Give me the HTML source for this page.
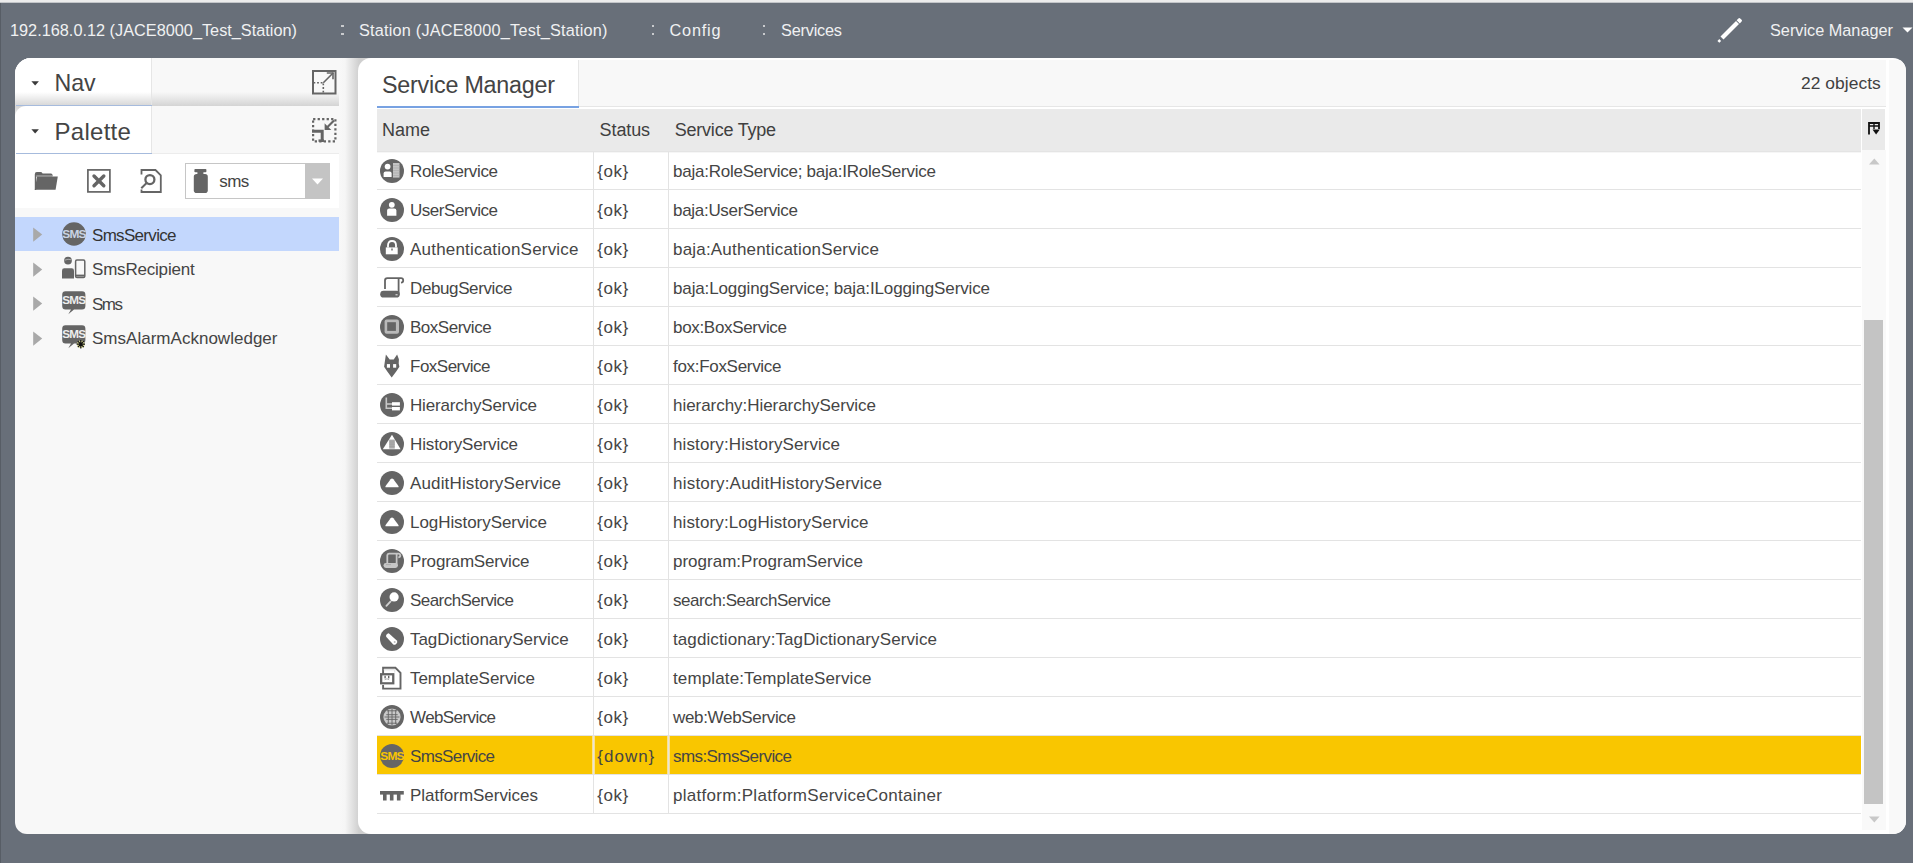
<!DOCTYPE html>
<html><head><meta charset="utf-8"><style>
*{margin:0;padding:0;box-sizing:border-box}
html,body{width:1913px;height:863px;overflow:hidden}
body{position:relative;background:#686f79;font-family:"Liberation Sans",sans-serif}
.t{position:absolute;white-space:pre;line-height:1.117em}
.ic{position:absolute;overflow:visible}
.r{position:absolute;left:377px;width:1484px}
.vl{position:absolute;top:152px;width:1px;height:662px;background:#e3e3e3}
#topband{position:absolute;left:0;top:0;width:1913px;height:3px;background:linear-gradient(#ececec 0,#ececec 2px,#9a9fa6 3px)}
#ledge{position:absolute;left:0;top:3px;width:1px;height:860px;background:#575d65}
#lp{position:absolute;left:15px;top:58px;width:360px;height:776px;background:#f8f8f8;border-radius:16px 0 0 12px;overflow:hidden}
#rp{position:absolute;left:358px;top:58px;width:1548px;height:776px;background:#fff;border-radius:13px;overflow:hidden}
</style></head><body>
<div id="topband"></div><div id="ledge"></div>
<div id="lp">
  <!-- nav header -->
  <div style="position:absolute;left:0;top:0;width:324px;height:49px;background:linear-gradient(#f8f8f8 0,#f8f8f8 34px,#d4d4d4 48px)"></div>
  <div style="position:absolute;left:0;top:0;width:137px;height:48px;background:linear-gradient(#fff 0,#fff 34px,#d9d9d9 47px);border-right:1px solid #e6e6e6"></div>
  <div style="position:absolute;left:1px;top:47px;width:136px;height:1px;background:#a6bbdd"></div>
  <!-- palette header -->
  <div style="position:absolute;left:0;top:48px;width:324px;height:48px;background:#f8f8f8;border-bottom:1px solid #ececec"></div>
  <div style="position:absolute;left:0;top:48px;width:16px;height:16px;background:linear-gradient(#d4d4d4,#e4e4e4 6px,#f4f4f4 14px)"></div>
  <div style="position:absolute;left:0;top:48px;width:137px;height:48px;background:#fff;border-right:1px solid #e6e6e6;border-top-left-radius:11px"></div>
  <div style="position:absolute;left:1px;top:95px;width:136px;height:1px;background:#a6bbdd"></div>
  <!-- toolbar -->
  <div style="position:absolute;left:0;top:96px;width:324px;height:54px;background:#fff"></div>
  <!-- selected tree row -->
  <div style="position:absolute;left:0;top:159px;width:324px;height:34px;background:#c3d7fd"></div>
  <!-- shadow strip -->
  <div style="position:absolute;left:324px;top:0;width:36px;height:776px;background:linear-gradient(90deg,#f8f8f8 0,#f6f6f6 6px,#cfcfcf 20px,#cfcfcf 36px)"></div>
</div>
<div id="rp">
  <div style="position:absolute;left:19px;top:2px;width:1509px;height:47px;background:#f8f8f8;border-bottom:1px solid #e6e6e6"></div>
  <div style="position:absolute;left:19px;top:2px;width:202px;height:48px;background:#fff;border-right:1px solid #e6e6e6"></div>
  <div style="position:absolute;left:19px;top:48px;width:202px;height:2px;background:#78a2e2"></div>
  <div style="position:absolute;left:19px;top:51px;width:1484px;height:44px;background:linear-gradient(#eaeaea 0,#eaeaea 42px,#e4e4e4 42px,#e4e4e4 43px,#f6f6f6 43px)"></div>
  <div style="position:absolute;left:1504px;top:51px;width:23px;height:41px;background:#eaeaea"></div>
  <div style="position:absolute;left:1504px;top:92px;width:24px;height:680px;background:#f9f9f9"></div>
  <div style="position:absolute;left:1506px;top:262px;width:19px;height:484px;background:#c4c4c4"></div>
  <div style="position:absolute;left:1531px;top:2px;width:17px;height:774px;background:#f9f9f9"></div>
</div>
<div class="r" style="top:189px;height:1px;background:#e3e3e3"></div><div class="r" style="top:228px;height:1px;background:#e3e3e3"></div><div class="r" style="top:267px;height:1px;background:#e3e3e3"></div><div class="r" style="top:306px;height:1px;background:#e3e3e3"></div><div class="r" style="top:345px;height:1px;background:#e3e3e3"></div><div class="r" style="top:384px;height:1px;background:#e3e3e3"></div><div class="r" style="top:423px;height:1px;background:#e3e3e3"></div><div class="r" style="top:462px;height:1px;background:#e3e3e3"></div><div class="r" style="top:501px;height:1px;background:#e3e3e3"></div><div class="r" style="top:540px;height:1px;background:#e3e3e3"></div><div class="r" style="top:579px;height:1px;background:#e3e3e3"></div><div class="r" style="top:618px;height:1px;background:#e3e3e3"></div><div class="r" style="top:657px;height:1px;background:#e3e3e3"></div><div class="r" style="top:696px;height:1px;background:#e3e3e3"></div><div class="r" style="top:735px;height:1px;background:#e3e3e3"></div><div class="r" style="top:736px;height:38px;background:#f9c600"></div><div class="r" style="top:774px;height:1px;background:#e3e3e3"></div><div class="r" style="top:813px;height:1px;background:#e3e3e3"></div><div class="vl" style="left:593px"></div><div class="vl" style="left:668px"></div><div style="position:absolute;left:593px;top:736px;width:1px;height:38px;background:#e6e3d8"></div><div style="position:absolute;left:594px;top:736px;width:1px;height:38px;background:#fbe28e"></div><div style="position:absolute;left:592px;top:736px;width:1px;height:38px;background:#fbe28e"></div><div style="position:absolute;left:668px;top:736px;width:1px;height:38px;background:#e6e3d8"></div><div style="position:absolute;left:669px;top:736px;width:1px;height:38px;background:#fbe28e"></div><div style="position:absolute;left:667px;top:736px;width:1px;height:38px;background:#fbe28e"></div><svg class="ic" style="left:380px;top:159px" width="24" height="24" viewBox="0 0 24 24"><circle cx="12" cy="12" r="12" fill="#656565"/><circle cx="7.6" cy="7.6" r="2.9" fill="#fff"/><path d="M3.6 18V14.5Q3.6 12.4 5.6 12.4H9.6Q11.6 12.4 11.6 14.5V18Z" fill="#fff"/><rect x="13" y="4" width="6.5" height="14.6" fill="#c4c4c4"/><path d="M13 6.5H19.5M13 9H19.5M13 11.5H19.5M13 14H19.5M13 16.5H19.5" stroke="#aaa" stroke-width="0.6"/></svg><svg class="ic" style="left:380px;top:198px" width="24" height="24" viewBox="0 0 24 24"><circle cx="12" cy="12" r="12" fill="#656565"/><circle cx="11.8" cy="6.8" r="2.9" fill="#fff"/><path d="M7.1 17.7V12.6Q7.1 10.5 9.2 10.5H14.3Q16.4 10.5 16.4 12.6V17.7Z" fill="#fff"/></svg><svg class="ic" style="left:380px;top:237px" width="24" height="24" viewBox="0 0 24 24"><circle cx="12" cy="12" r="12" fill="#656565"/><path d="M8 10.5V8.3Q8 4 12 4Q16 4 16 8.3V10.5" fill="none" stroke="#fff" stroke-width="1.8"/><rect x="5.8" y="10.4" width="11.9" height="6.9" fill="#fff"/><circle cx="11.9" cy="8.2" r="2" fill="#656565"/><rect x="11.3" y="11.5" width="1.4" height="2" fill="#656565"/></svg><svg class="ic" style="left:380px;top:276px" width="24" height="24" viewBox="0 0 24 24"><path d="M5 13V4.6Q5 2.2 7.4 2.2H21Q23.2 2.2 23.2 4.4Q23.2 6.4 21 6.6" fill="none" stroke="#656565" stroke-width="1.8"/><path d="M18.6 2.5V18.5" stroke="#656565" stroke-width="1.8"/><rect x="0.2" y="14.8" width="19.6" height="6.8" rx="3.4" fill="#656565"/><path d="M15.5 18.8H17.6" stroke="#fff" stroke-width="0.9"/></svg><svg class="ic" style="left:380px;top:315px" width="24" height="24" viewBox="0 0 24 24"><circle cx="12" cy="12" r="12" fill="#656565"/><rect x="4.6" y="4.4" width="14.4" height="14.4" rx="2" fill="#b9b9b9"/><rect x="7.2" y="7.2" width="8.7" height="8.7" fill="#656565"/></svg><svg class="ic" style="left:380px;top:354px" width="24" height="24" viewBox="0 0 24 24"><path d="M4.6 9.2L5.9 0.4L9.7 5.6H13.7L17.1 0.4L18.9 5.2L18.7 9.6L19.4 12.8L16.2 17.4L11.7 23.4L7.3 17.4L4.1 12.8Z" fill="#656565"/><rect x="6.9" y="10.1" width="3.1" height="3.6" fill="#fff"/><rect x="13.1" y="10.1" width="3.1" height="3.6" fill="#fff"/></svg><svg class="ic" style="left:380px;top:393px" width="24" height="24" viewBox="0 0 24 24"><circle cx="12" cy="12" r="12" fill="#656565"/><path d="M6.3 4.6V15.3H12" fill="none" stroke="#c8c8c8" stroke-width="1.6"/><path d="M6.3 11H12" stroke="#c8c8c8" stroke-width="1.6"/><rect x="12" y="9.2" width="7.9" height="3.4" fill="#fff"/><rect x="12" y="14" width="7.9" height="3.4" fill="#fff"/></svg><svg class="ic" style="left:380px;top:432px" width="24" height="24" viewBox="0 0 24 24"><circle cx="12" cy="12" r="12" fill="#656565"/><path d="M12 2.7L20.6 17.2H2.8Z" fill="#fff"/><rect x="9.2" y="7.6" width="5.6" height="9" fill="#aaa"/><path d="M9.2 10H14.8M9.2 12.2H14.8M9.2 14.4H14.8" stroke="#999" stroke-width="0.5"/></svg><svg class="ic" style="left:380px;top:471px" width="24" height="24" viewBox="0 0 24 24"><circle cx="12" cy="12" r="12" fill="#656565"/><path d="M5.6 16.3Q5 16.3 5.6 14.9L10.6 8.2Q12 6.8 13.4 8.2L18.4 14.9Q19 16.3 18.4 16.3Z" fill="#fff"/></svg><svg class="ic" style="left:380px;top:510px" width="24" height="24" viewBox="0 0 24 24"><circle cx="12" cy="12" r="12" fill="#656565"/><path d="M5.6 16.3Q5 16.3 5.6 14.9L10.6 8.2Q12 6.8 13.4 8.2L18.4 14.9Q19 16.3 18.4 16.3Z" fill="#fff"/></svg><svg class="ic" style="left:380px;top:549px" width="24" height="24" viewBox="0 0 24 24"><circle cx="12" cy="12" r="12" fill="#656565"/><path d="M7.3 14.4V6.6Q7.3 4.6 9.3 4.6H18.3Q20.3 4.6 20.3 6.6Q20.3 8.3 18.3 8.3" fill="none" stroke="#c6c6c6" stroke-width="1.8"/><path d="M16.6 5V17" stroke="#c6c6c6" stroke-width="1.8"/><rect x="9.6" y="6.2" width="5.6" height="7" fill="#656565"/><rect x="3.5" y="14.1" width="14.4" height="4.8" rx="2.4" fill="#c6c6c6"/><path d="M6 15.6H11" stroke="#999" stroke-width="0.6"/></svg><svg class="ic" style="left:380px;top:588px" width="24" height="24" viewBox="0 0 24 24"><circle cx="12" cy="12" r="12" fill="#656565"/><circle cx="14.1" cy="8.9" r="4.6" fill="#fff"/><path d="M6.4 17.8L10.6 13.4" stroke="#d0d0d0" stroke-width="1.8" stroke-linecap="round"/></svg><svg class="ic" style="left:380px;top:627px" width="24" height="24" viewBox="0 0 24 24"><circle cx="12" cy="12" r="12" fill="#656565"/><path d="M9 6.4L16.8 13.4Q18 14.8 16.6 16.4L15.8 17.2Q14.4 18.4 13 17.2L6.4 10Q5.6 9 6.4 7.8L7.2 7Q8 6.2 9 6.4Z" fill="#fff"/><circle cx="14.7" cy="14.9" r="1" fill="#bbb"/></svg><svg class="ic" style="left:380px;top:666px" width="24" height="24" viewBox="0 0 24 24"><path d="M3.1 9V1.8H15.4L20.5 6.9V22.6H3.1V19" fill="none" stroke="#656565" stroke-width="1.9"/><path d="M3.6 3.8H14.8V6.5" fill="none" stroke="#ddd" stroke-width="1"/><rect x="0" y="7.1" width="14.4" height="11.3" fill="#656565"/><rect x="2.3" y="9.4" width="9.8" height="6.8" fill="#fff"/><rect x="4.4" y="9.8" width="1.4" height="2.6" fill="#656565"/><rect x="8" y="9.8" width="1.4" height="2.6" fill="#656565"/><path d="M4.6 13.8L7 12.8L9.2 13.8" fill="none" stroke="#999" stroke-width="0.8"/></svg><svg class="ic" style="left:380px;top:705px" width="24" height="24" viewBox="0 0 24 24"><circle cx="12" cy="12" r="12" fill="#656565"/><circle cx="12" cy="12" r="8.6" fill="#c9c9c9"/><path d="M6.3 9.7H17.7M4.5 12H19.5M6.3 14.4H17.7M7 5.8H17M7 18.2H17M8.3 5V19M12 3.5V20.5M15.7 5V19" stroke="#656565" stroke-width="0.9"/></svg><svg class="ic" style="left:380px;top:744px" width="24" height="24" viewBox="0 0 24 24"><circle cx="12" cy="12" r="12" fill="#656565"/><text x="12" y="15.6" text-anchor="middle" font-family="Liberation Sans" font-weight="bold" font-size="11" letter-spacing="-0.7" fill="#f9c600" transform="translate(12 0) scale(1.08 1) translate(-12 0)">SMS</text></svg><svg class="ic" style="left:380px;top:783px" width="24" height="24" viewBox="0 0 24 24"><rect x="0" y="8" width="23.8" height="3.6" fill="#656565"/><rect x="3" y="11" width="3.6" height="6.5" fill="#656565"/><rect x="9.9" y="11" width="3.6" height="6.5" fill="#656565"/><rect x="16.9" y="11" width="3.6" height="6.5" fill="#656565"/></svg>
<div style="position:absolute;left:341.0px;top:24.8px;width:2.6px;height:2.6px;background:#c9cbce"></div><div style="position:absolute;left:341.0px;top:32.8px;width:2.6px;height:2.6px;background:#c9cbce"></div><div style="position:absolute;left:651.7px;top:24.8px;width:2.6px;height:2.6px;background:#c9cbce"></div><div style="position:absolute;left:651.7px;top:32.8px;width:2.6px;height:2.6px;background:#c9cbce"></div><div style="position:absolute;left:762.8px;top:24.8px;width:2.6px;height:2.6px;background:#c9cbce"></div><div style="position:absolute;left:762.8px;top:32.8px;width:2.6px;height:2.6px;background:#c9cbce"></div><svg class="ic" style="left:1716px;top:16px" width="28" height="28" viewBox="0 0 28 28"><path d="M6 22L21.5 6.5" stroke="#fff" stroke-width="4.2"/><path d="M20.6 4.2L22.4 2.4Q23.3 1.5 24.2 2.4L25.6 3.8Q26.5 4.7 25.6 5.6L23.8 7.4Z" fill="#fff"/><rect x="2" y="23.6" width="2.6" height="2.6" fill="#fff" transform="rotate(45 3.3 24.9)"/></svg><svg class="ic" style="left:1902px;top:27px" width="11" height="6" viewBox="0 0 11 6"><path d="M0.5 0.5H10.5L5.5 5.5Z" fill="#fff"/></svg><svg class="ic" style="left:31px;top:80.5px" width="9" height="6" viewBox="0 0 9 6"><path d="M0.4 0.2H7.9L4.15 4.6Z" fill="#3a3a3a"/></svg><svg class="ic" style="left:31px;top:128.5px" width="9" height="6" viewBox="0 0 9 6"><path d="M0.4 0.2H7.9L4.15 4.6Z" fill="#3a3a3a"/></svg><svg class="ic" style="left:312px;top:70px" width="25" height="25" viewBox="0 0 25 25"><rect x="1" y="1" width="22.5" height="22.5" fill="none" stroke="#656565" stroke-width="2"/><path d="M11.3 12.7L21.3 2.7" stroke="#656565" stroke-width="1.6"/><path d="M14.8 3H21V9.2" fill="none" stroke="#656565" stroke-width="1.6"/><path d="M1.5 12.7H10.5M11.3 13.5V23" stroke="#656565" stroke-width="1.6" stroke-dasharray="1.8 1.8"/></svg><svg class="ic" style="left:312px;top:118px" width="25" height="25" viewBox="0 0 25 25"><rect x="1.1" y="1.1" width="22.3" height="22.3" fill="none" stroke="#656565" stroke-width="2.2" stroke-dasharray="2.3 2.2"/><path d="M0 13.2H10.2V24" fill="none" stroke="#656565" stroke-width="3"/><path d="M6.5 22.6H12" stroke="#656565" stroke-width="2.4"/><path d="M22 2.5L15.5 9" stroke="#656565" stroke-width="2.2"/><path d="M12.6 11.9V5.2L19.3 11.9Z" fill="#656565"/></svg><svg class="ic" style="left:34px;top:171px" width="25" height="20" viewBox="0 0 25 20"><path d="M0.8 3.2Q0.8 1 2.8 1H6.5Q7.8 1 8.6 2.4H17Q18.5 2.4 18.5 4V5.5H2.2V19H0.8Z" fill="#656565"/><path d="M3 5.6H23.8L21.6 18.8H0.8Z" fill="#656565"/><path d="M2.2 4.6H18.3" stroke="#9a9a9a" stroke-width="0.9"/></svg><svg class="ic" style="left:87px;top:169px" width="24" height="24" viewBox="0 0 24 24"><rect x="0.9" y="0.9" width="22" height="22" fill="none" stroke="#656565" stroke-width="1.7"/><path d="M7 7L16.8 16.8M16.8 7L7 16.8" stroke="#656565" stroke-width="3.4" stroke-linecap="round"/></svg><svg class="ic" style="left:140px;top:169px" width="22" height="24" viewBox="0 0 22 24"><path d="M1.5 5.5V1H15.5L20.8 6.3V23H1.5V20.5" fill="none" stroke="#656565" stroke-width="1.8"/><circle cx="9.9" cy="10.6" r="4.5" fill="none" stroke="#656565" stroke-width="2.3"/><path d="M6.6 14L1.3 19.3" stroke="#656565" stroke-width="2"/></svg><div style="position:absolute;left:185px;top:163px;width:145px;height:36px;border:1px solid #c6c6c6;background:#fff"></div><div style="position:absolute;left:305px;top:163px;width:25px;height:36px;background:#c4c4c4"></div><svg class="ic" style="left:311.5px;top:178px" width="11" height="7" viewBox="0 0 11 7"><path d="M0 0.5H11L5.5 6.5Z" fill="#fff"/></svg><svg class="ic" style="left:193px;top:169px" width="16" height="25" viewBox="0 0 16 25"><rect x="1.4" y="0" width="12" height="3.3" rx="0.8" fill="#656565"/><rect x="4.4" y="3" width="6" height="2.6" fill="#656565"/><rect x="0.8" y="5" width="14" height="19" rx="2.8" fill="#656565"/></svg><svg class="ic" style="left:33px;top:227.4px" width="10" height="16" viewBox="0 0 10 16"><path d="M0.2 0.4L9.2 7.6L0.2 14.8Z" fill="#a9a9a9"/></svg><svg class="ic" style="left:33px;top:261.9px" width="10" height="16" viewBox="0 0 10 16"><path d="M0.2 0.4L9.2 7.6L0.2 14.8Z" fill="#a9a9a9"/></svg><svg class="ic" style="left:33px;top:296.4px" width="10" height="16" viewBox="0 0 10 16"><path d="M0.2 0.4L9.2 7.6L0.2 14.8Z" fill="#a9a9a9"/></svg><svg class="ic" style="left:33px;top:330.9px" width="10" height="16" viewBox="0 0 10 16"><path d="M0.2 0.4L9.2 7.6L0.2 14.8Z" fill="#a9a9a9"/></svg><svg class="ic" style="left:62px;top:222px" width="24" height="24" viewBox="0 0 24 24"><circle cx="12" cy="12" r="11.8" fill="#656565"/><text x="12" y="15.6" text-anchor="middle" font-family="Liberation Sans" font-weight="bold" font-size="11" letter-spacing="-0.7" fill="#c9d3e3" transform="translate(12 0) scale(1.08 1) translate(-12 0)">SMS</text></svg><svg class="ic" style="left:62px;top:256px" width="24" height="24" viewBox="0 0 24 24"><circle cx="6" cy="4.6" r="3.9" fill="#656565"/><path d="M2.6 4.2Q6 2.6 9.6 3.8" stroke="#bbb" stroke-width="0.8" fill="none"/><path d="M0 22.6V14.6Q0 12.3 2.3 12.3H9.7Q12 12.3 12 14.6V22.6Z" fill="#656565"/><rect x="13.6" y="4" width="9.2" height="17.6" rx="1.4" fill="none" stroke="#656565" stroke-width="1.5"/><path d="M13.6 19.6H22.8" stroke="#656565" stroke-width="2"/></svg><svg class="ic" style="left:62px;top:291px" width="24" height="24" viewBox="0 0 24 24"><path d="M3.5 0.3H20Q23.4 0.3 23.4 3.7V15Q23.4 18.5 20 18.5H12L6.3 23.2L9 18.5H3.5Q0.2 18.5 0.2 15V3.7Q0.2 0.3 3.5 0.3Z" fill="#656565"/><text x="11.8" y="13.4" text-anchor="middle" font-family="Liberation Sans" font-weight="bold" font-size="10.6" letter-spacing="-0.6" fill="#eee" transform="translate(12 0) scale(1.1 1) translate(-12 0)">SMS</text></svg><svg class="ic" style="left:62px;top:325px" width="26" height="26" viewBox="0 0 26 26"><path d="M3.5 0.3H20Q23.4 0.3 23.4 3.7V15Q23.4 18.5 20 18.5H12L6.3 23.2L9 18.5H3.5Q0.2 18.5 0.2 15V3.7Q0.2 0.3 3.5 0.3Z" fill="#656565"/><text x="11.8" y="13.4" text-anchor="middle" font-family="Liberation Sans" font-weight="bold" font-size="10.6" letter-spacing="-0.6" fill="#eee" transform="translate(12 0) scale(1.1 1) translate(-12 0)">SMS</text><g transform="translate(18.8 19.2)"><circle r="3.8" fill="#d8d890"/><path d="M-4.2 0H4.2M0 -4.2V4.2M-3 -3L3 3M3 -3L-3 3" stroke="#111" stroke-width="1.2"/></g></svg><svg class="ic" style="left:1868px;top:122px" width="12" height="13" viewBox="0 0 12 13"><path d="M1 12.5V1H11V7" fill="none" stroke="#111" stroke-width="1.8"/><path d="M1 4H11M6 1V7" stroke="#111" stroke-width="1.4"/><path d="M4.5 7.5H11.8L8.1 12.5Z" fill="#111"/></svg><svg class="ic" style="left:1868.5px;top:158px" width="11" height="7" viewBox="0 0 11 7"><path d="M0 6.5H10.6L5.3 0.5Z" fill="#c8c8c8"/></svg><svg class="ic" style="left:1868.5px;top:816px" width="11" height="7" viewBox="0 0 11 7"><path d="M0 0.5H10.6L5.3 6.5Z" fill="#c8c8c8"/></svg>
<div class="t" style="left:10.0px;top:20.75px;font-size:16.3px;letter-spacing:0.002px;color:#f0f1f2">192.168.0.12 (JACE8000_Test_Station)</div><div class="t" style="left:359.0px;top:20.75px;font-size:16.3px;letter-spacing:0.198px;color:#f0f1f2">Station (JACE8000_Test_Station)</div><div class="t" style="left:669.5px;top:20.75px;font-size:16.3px;letter-spacing:0.784px;color:#f0f1f2">Config</div><div class="t" style="left:781.0px;top:20.75px;font-size:16.3px;letter-spacing:-0.205px;color:#f0f1f2">Services</div><div class="t" style="left:1770.0px;top:20.75px;font-size:16.3px;letter-spacing:-0.006px;color:#f0f1f2">Service Manager</div><div class="t" style="left:54.6px;top:71.40px;font-size:23.2px;letter-spacing:-0.125px;color:#444444">Nav</div><div class="t" style="left:54.6px;top:118.58px;font-size:24px;letter-spacing:0.264px;color:#444444">Palette</div><div class="t" style="left:219.3px;top:171.62px;font-size:17px;letter-spacing:-0.586px;color:#444">sms</div><div class="t" style="left:92.0px;top:225.92px;font-size:17px;letter-spacing:-0.688px;color:#333">SmsService</div><div class="t" style="left:92.0px;top:260.22px;font-size:17px;letter-spacing:-0.198px;color:#444">SmsRecipient</div><div class="t" style="left:92.0px;top:294.62px;font-size:17px;letter-spacing:-1.500px;color:#444">Sms</div><div class="t" style="left:92.0px;top:329.12px;font-size:17px;letter-spacing:0.016px;color:#444">SmsAlarmAcknowledger</div><div class="t" style="left:382.0px;top:71.81px;font-size:23.3px;letter-spacing:-0.222px;color:#444444">Service Manager</div><div class="t" style="left:1801.0px;top:74.25px;font-size:17.4px;letter-spacing:0.047px;color:#404040">22 objects</div><div class="t" style="left:382.0px;top:120.01px;font-size:18px;letter-spacing:-0.005px;color:#404040">Name</div><div class="t" style="left:599.6px;top:120.01px;font-size:18px;letter-spacing:-0.106px;color:#404040">Status</div><div class="t" style="left:674.7px;top:120.01px;font-size:18px;letter-spacing:-0.212px;color:#404040">Service Type</div><div class="t" style="left:410.0px;top:161.81px;font-size:17px;letter-spacing:-0.366px;color:#454545">RoleService</div><div class="t" style="left:597.3px;top:161.81px;font-size:17px;letter-spacing:0.562px;color:#454545">{ok}</div><div class="t" style="left:673.0px;top:161.81px;font-size:17px;letter-spacing:-0.241px;color:#454545">baja:RoleService; baja:IRoleService</div><div class="t" style="left:410.0px;top:200.81px;font-size:17px;letter-spacing:-0.459px;color:#454545">UserService</div><div class="t" style="left:597.3px;top:200.81px;font-size:17px;letter-spacing:0.562px;color:#454545">{ok}</div><div class="t" style="left:673.0px;top:200.81px;font-size:17px;letter-spacing:-0.297px;color:#454545">baja:UserService</div><div class="t" style="left:410.0px;top:239.81px;font-size:17px;letter-spacing:0.203px;color:#454545">AuthenticationService</div><div class="t" style="left:597.3px;top:239.81px;font-size:17px;letter-spacing:0.562px;color:#454545">{ok}</div><div class="t" style="left:673.0px;top:239.81px;font-size:17px;letter-spacing:0.188px;color:#454545">baja:AuthenticationService</div><div class="t" style="left:410.0px;top:278.81px;font-size:17px;letter-spacing:-0.389px;color:#454545">DebugService</div><div class="t" style="left:597.3px;top:278.81px;font-size:17px;letter-spacing:0.562px;color:#454545">{ok}</div><div class="t" style="left:673.0px;top:278.81px;font-size:17px;letter-spacing:-0.132px;color:#454545">baja:LoggingService; baja:ILoggingService</div><div class="t" style="left:410.0px;top:317.81px;font-size:17px;letter-spacing:-0.487px;color:#454545">BoxService</div><div class="t" style="left:597.3px;top:317.81px;font-size:17px;letter-spacing:0.562px;color:#454545">{ok}</div><div class="t" style="left:673.0px;top:317.81px;font-size:17px;letter-spacing:-0.317px;color:#454545">box:BoxService</div><div class="t" style="left:410.0px;top:356.81px;font-size:17px;letter-spacing:-0.503px;color:#454545">FoxService</div><div class="t" style="left:597.3px;top:356.81px;font-size:17px;letter-spacing:0.562px;color:#454545">{ok}</div><div class="t" style="left:673.0px;top:356.81px;font-size:17px;letter-spacing:-0.303px;color:#454545">fox:FoxService</div><div class="t" style="left:410.0px;top:395.81px;font-size:17px;letter-spacing:-0.163px;color:#454545">HierarchyService</div><div class="t" style="left:597.3px;top:395.81px;font-size:17px;letter-spacing:0.562px;color:#454545">{ok}</div><div class="t" style="left:673.0px;top:395.81px;font-size:17px;letter-spacing:-0.043px;color:#454545">hierarchy:HierarchyService</div><div class="t" style="left:410.0px;top:434.81px;font-size:17px;letter-spacing:-0.123px;color:#454545">HistoryService</div><div class="t" style="left:597.3px;top:434.81px;font-size:17px;letter-spacing:0.562px;color:#454545">{ok}</div><div class="t" style="left:673.0px;top:434.81px;font-size:17px;letter-spacing:0.125px;color:#454545">history:HistoryService</div><div class="t" style="left:410.0px;top:473.81px;font-size:17px;letter-spacing:0.148px;color:#454545">AuditHistoryService</div><div class="t" style="left:597.3px;top:473.81px;font-size:17px;letter-spacing:0.562px;color:#454545">{ok}</div><div class="t" style="left:673.0px;top:473.81px;font-size:17px;letter-spacing:0.226px;color:#454545">history:AuditHistoryService</div><div class="t" style="left:410.0px;top:512.82px;font-size:17px;letter-spacing:-0.060px;color:#454545">LogHistoryService</div><div class="t" style="left:597.3px;top:512.82px;font-size:17px;letter-spacing:0.562px;color:#454545">{ok}</div><div class="t" style="left:673.0px;top:512.82px;font-size:17px;letter-spacing:0.115px;color:#454545">history:LogHistoryService</div><div class="t" style="left:410.0px;top:551.82px;font-size:17px;letter-spacing:-0.190px;color:#454545">ProgramService</div><div class="t" style="left:597.3px;top:551.82px;font-size:17px;letter-spacing:0.562px;color:#454545">{ok}</div><div class="t" style="left:673.0px;top:551.82px;font-size:17px;letter-spacing:0.004px;color:#454545">program:ProgramService</div><div class="t" style="left:410.0px;top:590.82px;font-size:17px;letter-spacing:-0.547px;color:#454545">SearchService</div><div class="t" style="left:597.3px;top:590.82px;font-size:17px;letter-spacing:0.562px;color:#454545">{ok}</div><div class="t" style="left:673.0px;top:590.82px;font-size:17px;letter-spacing:-0.438px;color:#454545">search:SearchService</div><div class="t" style="left:410.0px;top:629.82px;font-size:17px;letter-spacing:-0.057px;color:#454545">TagDictionaryService</div><div class="t" style="left:597.3px;top:629.82px;font-size:17px;letter-spacing:0.562px;color:#454545">{ok}</div><div class="t" style="left:673.0px;top:629.82px;font-size:17px;letter-spacing:0.097px;color:#454545">tagdictionary:TagDictionaryService</div><div class="t" style="left:410.0px;top:668.82px;font-size:17px;letter-spacing:-0.048px;color:#454545">TemplateService</div><div class="t" style="left:597.3px;top:668.82px;font-size:17px;letter-spacing:0.562px;color:#454545">{ok}</div><div class="t" style="left:673.0px;top:668.82px;font-size:17px;letter-spacing:0.126px;color:#454545">template:TemplateService</div><div class="t" style="left:410.0px;top:707.82px;font-size:17px;letter-spacing:-0.594px;color:#454545">WebService</div><div class="t" style="left:597.3px;top:707.82px;font-size:17px;letter-spacing:0.562px;color:#454545">{ok}</div><div class="t" style="left:673.0px;top:707.82px;font-size:17px;letter-spacing:-0.327px;color:#454545">web:WebService</div><div class="t" style="left:410.0px;top:746.82px;font-size:17px;letter-spacing:-0.632px;color:#454545">SmsService</div><div class="t" style="left:597.3px;top:746.82px;font-size:17px;letter-spacing:1.000px;color:#454545">{down}</div><div class="t" style="left:673.0px;top:746.82px;font-size:17px;letter-spacing:-0.583px;color:#454545">sms:SmsService</div><div class="t" style="left:410.0px;top:785.82px;font-size:17px;letter-spacing:-0.032px;color:#454545">PlatformServices</div><div class="t" style="left:597.3px;top:785.82px;font-size:17px;letter-spacing:0.562px;color:#454545">{ok}</div><div class="t" style="left:673.0px;top:785.82px;font-size:17px;letter-spacing:0.287px;color:#454545">platform:PlatformServiceContainer</div>
</body></html>
